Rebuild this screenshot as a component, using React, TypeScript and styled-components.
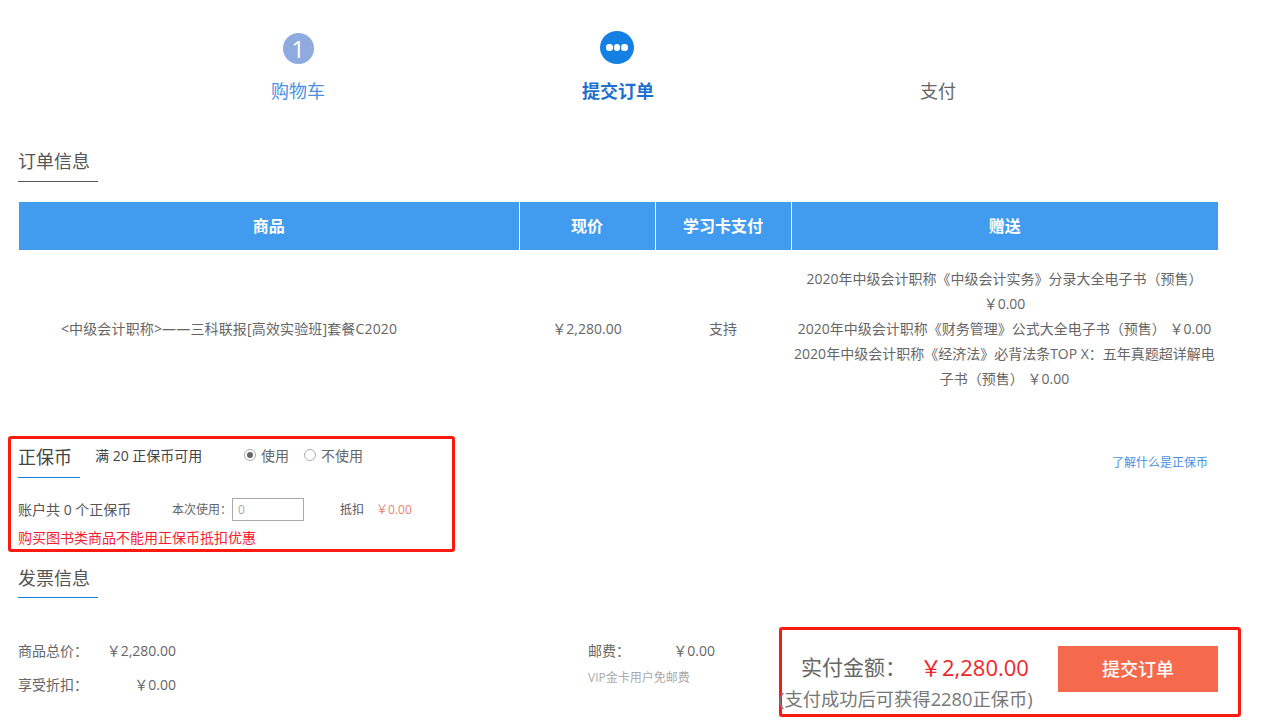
import React from 'react';
import styled, { createGlobalStyle } from 'styled-components';

const GlobalStyle = createGlobalStyle`
  html, body {
    margin: 0;
    padding: 0;
    background: #fff;
    overflow: hidden;
  }
  body {
    font-family: "Open Sans", "Noto Sans CJK SC", sans-serif;
    color: #666;
  }
`;

const Page = styled.div`
  width: 1283px;
  height: 720px;
  overflow: hidden;
  padding-left: 18px;
  box-sizing: border-box;
`;

const Steps = styled.div`
  display: flex;
  width: 960px;
  margin-left: 120px;
  padding-top: 30px;
`;

const Step = styled.div`
  width: 320px;
  display: flex;
  flex-direction: column;
  align-items: center;
`;

const StepIcon = styled.div`
  height: 36px;
  display: flex;
  align-items: center;
  justify-content: center;
`;

const NumberCircle = styled.div`
  width: 31px;
  height: 31px;
  margin-top: 1px;
  border-radius: 50%;
  background: #8eaadf;
  color: #fff;
  font-size: 24px;
  line-height: 31px;
  text-align: center;
`;

const DotsCircle = styled.div`
  width: 34px;
  height: 33px;
  margin-left: -2px;
  margin-top: -1px;
  border-radius: 50%;
  background: #1480e3;
  display: flex;
  align-items: center;
  justify-content: center;
  gap: 1px;

  span {
    width: 6.5px;
    height: 6.5px;
    border-radius: 50%;
    background: #fff;
  }
`;

const StepLabel = styled.div<{ $tone: 'done' | 'active' | 'todo' }>`
  margin-top: 10px;
  font-size: 18px;
  line-height: 30px;
  font-weight: ${(p) => (p.$tone === 'active' ? 700 : 400)};
  color: ${(p) =>
    p.$tone === 'done' ? '#4a90e2' : p.$tone === 'active' ? '#1f6fd0' : '#666'};
`;

const OrderTitle = styled.div`
  width: 80px;
  margin-top: 42px;
  padding-bottom: 7px;
  border-bottom: 1px solid #555;
  font-size: 18px;
  line-height: 26px;
  color: #555;
`;

const OrderTable = styled.table`
  width: 1199px;
  margin: 20px 0 0 1px;
  border-collapse: collapse;
  table-layout: fixed;
  font-size: 14px;

  th {
    height: 48px;
    padding: 0 0 2px;
    box-sizing: border-box;
    background: #419bee;
    color: #fff;
    font-size: 16px;
    font-weight: 700;
    border-left: 1px solid #fff;
  }
  th:first-child {
    border-left: 0;
  }
  td {
    padding: 16px 0 17px;
    text-align: center;
    line-height: 25px;
    color: #666;
  }
`;

const ProductCell = styled.td`
  && {
    padding-right: 80px;
    letter-spacing: 0.15px;
  }
`;

const CoinBox = styled.section`
  width: 447px;
  height: 116px;
  margin: 28px 0 0 -10px;
  padding: 0 0 0 7px;
  box-sizing: border-box;
  border: 3px solid #fb1a10;
  border-radius: 3px;
  flex-shrink: 0;
`;

const CoinTop = styled.div`
  display: flex;
  align-items: flex-start;
`;

const CoinTitle = styled.div`
  width: 62px;
  margin-top: 3px;
  padding-bottom: 5px;
  border-bottom: 1px solid #1480e3;
  font-size: 18px;
  line-height: 30px;
  color: #444;
`;

const CoinHint = styled.div`
  margin: 5px 0 0 15px;
  width: 149px;
  font-size: 14px;
  line-height: 24px;
  color: #444;
  white-space: nowrap;
`;

const RadioLabel = styled.label`
  display: flex;
  align-items: center;
  margin-top: 5px;
  font-size: 14px;
  line-height: 24px;
  color: #666;
`;

const NextRadio = styled(RadioLabel)`
  margin-left: 15px;
`;

const RadioDot = styled.span<{ $on?: boolean }>`
  width: 12px;
  height: 12px;
  margin: -3px 5px 0 0;
  box-sizing: border-box;
  border: 1px solid #aaa;
  border-radius: 50%;
  display: flex;
  align-items: center;
  justify-content: center;

  &::after {
    content: '';
    width: 6px;
    height: 6px;
    border-radius: 50%;
    background: ${(p) => (p.$on ? '#666' : 'transparent')};
  }
`;

const CoinRow = styled.div`
  display: flex;
  align-items: center;
  margin-top: 19px;
  height: 24px;
  font-size: 14px;
  color: #666;
`;

const CoinBalance = styled.span`
  width: 154px;
  color: #555;
  white-space: nowrap;
`;

const UseLabel = styled.span`
  width: 60px;
  font-size: 12px;
  white-space: nowrap;
`;

const UseInput = styled.input`
  width: 72px;
  height: 23px;
  margin-top: 1px;
  box-sizing: border-box;
  border: 1px solid #aaa;
  padding: 0 5px;
  font: inherit;
  font-size: 12px;
  color: #999;
  outline: none;

  &::placeholder {
    color: #aaa;
  }
`;

const OffsetLabel = styled.span`
  margin-left: 36px;
  font-size: 12px;
  color: #555;
`;

const OffsetValue = styled.span`
  margin-left: 12px;
  font-size: 12px;
  color: #ec7f70;
`;

const CoinWarning = styled.div`
  margin-top: 7px;
  font-size: 14px;
  line-height: 20px;
  color: #fb1a30;
  white-space: nowrap;
`;

const LearnLink = styled.a`
  display: block;
  font-size: 12px;
  line-height: 18px;
  color: #4a90e2;
  white-space: nowrap;
`;

const InvoiceTitle = styled.div`
  width: 80px;
  margin-top: 13px;
  padding-bottom: 6px;
  border-bottom: 1px solid #1480e3;
  font-size: 18px;
  line-height: 26px;
  color: #555;
`;

const MiddleRow = styled.div`
  display: flex;
  align-items: flex-start;
`;

const LearnSlot = styled.div`
  margin: 46px 0 0 657px;
`;

const BottomRow = styled.div`
  display: flex;
  align-items: flex-start;
  height: 122px;
`;

const PriceColumn = styled.div`
  width: 158px;
  padding-top: 41px;
  flex-shrink: 0;
`;

const PostColumn = styled.div`
  width: 127px;
  margin-left: 412px;
  padding-top: 41px;
  flex-shrink: 0;
`;

const PriceRow = styled.div`
  display: flex;
  justify-content: space-between;
  height: 34px;
  line-height: 24px;
  font-size: 14px;
  color: #666;
`;

const PostNote = styled.div`
  margin-top: -4px;
  font-size: 12px;
  line-height: 18px;
  color: #aaa;
  white-space: nowrap;
`;

const PayBox = styled.section`
  width: 462px;
  height: 90px;
  margin: 29px 0 0 64px;
  box-sizing: border-box;
  border: 3px solid #fb1a10;
  border-radius: 3px;
  flex-shrink: 0;
`;

const PayTop = styled.div`
  display: flex;
  align-items: flex-start;
  padding-top: 16px;
`;

const PayLabel = styled.span`
  margin: 6px 0 0 19px;
  width: 119px;
  font-size: 21px;
  line-height: 30px;
  color: #666;
  white-space: nowrap;
`;

const PayAmount = styled.span`
  margin-top: 6px;
  width: 138px;
  font-size: 22px;
  line-height: 30px;
  color: #f1262a;
  white-space: nowrap;
`;

const SubmitButton = styled.button`
  width: 160px;
  height: 46px;
  border: 0;
  margin: 0;
  padding: 0 0 2px;
  background: #f5694c;
  color: #fff;
  font: inherit;
  font-size: 18px;
  font-weight: 500;
`;

const PayNote = styled.div`
  margin: -5px 0 0 -3px;
  font-size: 18.3px;
  line-height: 24px;
  color: #777;
  white-space: nowrap;
`;

const gifts = [
  '2020年中级会计职称《中级会计实务》分录大全电子书（预售） ￥0.00',
  '2020年中级会计职称《财务管理》公式大全电子书（预售）  ￥0.00',
  '2020年中级会计职称《经济法》必背法条TOP X：五年真题超详解电子书（预售）  ￥0.00',
];

export default function App() {
  return (
    <Page>
      <GlobalStyle />
      <Steps>
        <Step>
          <StepIcon>
            <NumberCircle>1</NumberCircle>
          </StepIcon>
          <StepLabel $tone="done">购物车</StepLabel>
        </Step>
        <Step>
          <StepIcon>
            <DotsCircle>
              <span />
              <span />
              <span />
            </DotsCircle>
          </StepIcon>
          <StepLabel $tone="active">提交订单</StepLabel>
        </Step>
        <Step>
          <StepIcon />
          <StepLabel $tone="todo">支付</StepLabel>
        </Step>
      </Steps>

      <OrderTitle>订单信息</OrderTitle>
      <OrderTable>
        <colgroup>
          <col width={500} />
          <col width={136} />
          <col width={136} />
          <col width={427} />
        </colgroup>
        <thead>
          <tr>
            <th>商品</th>
            <th>现价</th>
            <th>学习卡支付</th>
            <th>赠送</th>
          </tr>
        </thead>
        <tbody>
          <tr>
            <ProductCell>&lt;中级会计职称&gt;——三科联报[高效实验班]套餐C2020</ProductCell>
            <td>￥2,280.00</td>
            <td>支持</td>
            <td>
              {gifts.map((gift) => (
                <div key={gift}>{gift}</div>
              ))}
            </td>
          </tr>
        </tbody>
      </OrderTable>

      <MiddleRow>
        <CoinBox>
          <CoinTop>
            <CoinTitle>正保币</CoinTitle>
            <CoinHint>满 20 正保币可用</CoinHint>
            <RadioLabel>
              <RadioDot $on />
              使用
            </RadioLabel>
            <NextRadio>
              <RadioDot />
              不使用
            </NextRadio>
          </CoinTop>
          <CoinRow>
            <CoinBalance>账户共 0 个正保币</CoinBalance>
            <UseLabel>本次使用：</UseLabel>
            <UseInput placeholder="0" />
            <OffsetLabel>抵扣</OffsetLabel>
            <OffsetValue>￥0.00</OffsetValue>
          </CoinRow>
          <CoinWarning>购买图书类商品不能用正保币抵扣优惠</CoinWarning>
        </CoinBox>
        <LearnSlot>
          <LearnLink>了解什么是正保币</LearnLink>
        </LearnSlot>
      </MiddleRow>

      <InvoiceTitle>发票信息</InvoiceTitle>

      <BottomRow>
        <PriceColumn>
          <PriceRow>
            <span>商品总价：</span>
            <span>￥2,280.00</span>
          </PriceRow>
          <PriceRow>
            <span>享受折扣：</span>
            <span>￥0.00</span>
          </PriceRow>
        </PriceColumn>
        <PostColumn>
          <PriceRow>
            <span>邮费：</span>
            <span>￥0.00</span>
          </PriceRow>
          <PostNote>VIP金卡用户免邮费</PostNote>
        </PostColumn>
        <PayBox>
          <PayTop>
            <PayLabel>实付金额：</PayLabel>
            <PayAmount>￥2,280.00</PayAmount>
            <SubmitButton>提交订单</SubmitButton>
          </PayTop>
          <PayNote>(支付成功后可获得2280正保币)</PayNote>
        </PayBox>
      </BottomRow>
    </Page>
  );
}
